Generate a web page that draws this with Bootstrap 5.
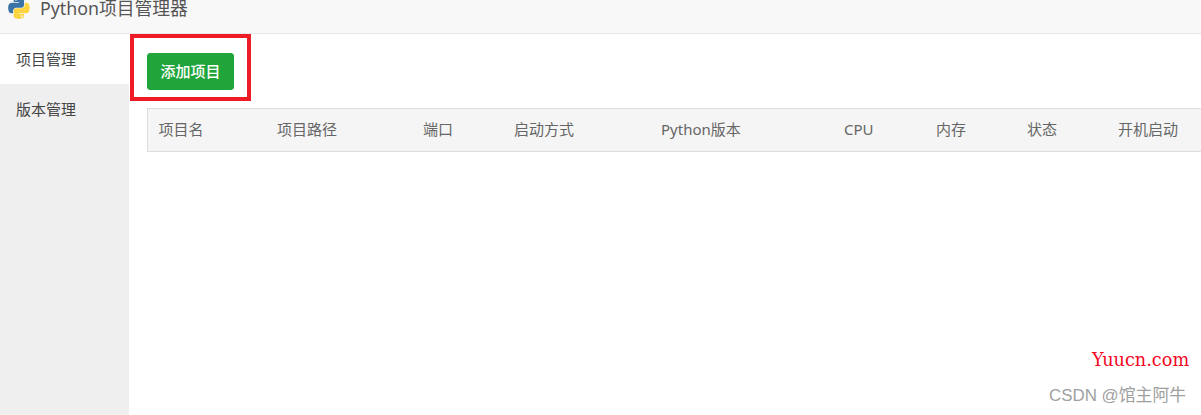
<!DOCTYPE html>
<html lang="zh">
<head>
<meta charset="utf-8">
<title>Python项目管理器</title>
<link href="https://cdn.jsdelivr.net/npm/bootstrap@5.3.0/dist/css/bootstrap.min.css" rel="stylesheet">
<style>
html,body{height:415px;overflow:hidden;background:#fff}
body{font-family:"Noto Sans","Noto Sans CJK SC",sans-serif;font-size:15px;color:#555;position:relative}
.topbar{height:34px;background:#f8f8f8;border-bottom:1px solid #e7e7e7;padding:0 0 0 8px;overflow:hidden;flex-wrap:nowrap;justify-content:flex-start;align-items:flex-start;gap:10px}
.pylogo{width:22px;height:22px;margin-top:-3px;flex:none}
.apptitle{font-size:17.8px;line-height:16px;color:#555}
.shell{height:381px}
.sidenav{width:129px;background:#efefef;flex:none}
.sidenav .nav-link{height:50px;line-height:50px;padding:0 0 0 16px;color:#444;font-size:15px;border-radius:0}
.sidenav .nav-link.active{background:#fff;color:#444}
.mainpane{flex:1;min-width:0;padding:19px 0 0 18px;overflow:hidden}
.addbtn{width:87px;height:37px;padding:0;font-size:15px;font-weight:500;line-height:35px;background:#20a53a;border-color:#20a53a;border-radius:3px;color:#fff;display:block}
.projtable{margin:18px 0 0;width:1080px;table-layout:fixed;border:1px solid #ddd;border-collapse:collapse}
.projtable th{background:#f5f5f5;color:#666;font-weight:400;font-size:15px;height:43px;padding:0 11px 2px 10.5px;vertical-align:middle;border:0;white-space:nowrap;box-shadow:none}
.redmark{position:absolute;left:130px;top:34px;width:121px;height:67px;border:4px solid #ee1c25}
.wm-site{position:absolute;left:1092px;top:350px;font-family:"DejaVu Serif",serif;font-size:17.7px;line-height:20px;color:#f5081f}
.wm-csdn{position:absolute;left:1049px;top:385px;font-family:"Liberation Sans","Noto Sans CJK SC",sans-serif;font-size:16.9px;line-height:22px;color:#a0a0a0}
</style>
</head>
<body>
<nav class="navbar topbar">
  <svg class="pylogo" viewBox="0 0 112 113" aria-hidden="true">
    <path fill="#3a74a6" d="M54.9 .9C50.3 .9 45.9 1.3 42.1 2 30.8 4 28.8 8.1 28.8 15.8V26H55.4V29.4H18.8C11.1 29.4 4.3 34 2.2 42.9-.2 53-.3 59.3 2.2 69.9 4.1 77.8 8.6 83.4 16.4 83.4H25.5V71.3C25.5 62.5 33.1 54.8 42.1 54.8H68.7C76.1 54.8 82 48.7 82 41.3V15.8C82 8.6 75.9 3.2 68.7 2 64.1 1.2 59.4 .9 54.9 .9ZM40.5 9.1C43.2 9.1 45.5 11.4 45.5 14.2 45.5 17 43.2 19.2 40.5 19.2 37.7 19.2 35.5 17 35.5 14.2 35.5 11.4 37.7 9.1 40.5 9.1Z"/>
    <path fill="#fcd43f" d="M85.4 29.4V41.2C85.4 50.4 77.6 58.1 68.7 58.1H42.1C34.8 58.1 28.8 64.3 28.8 71.6V97.1C28.8 104.3 35.1 108.6 42.1 110.7 50.5 113.2 58.6 113.6 68.7 110.7 75.4 108.7 82 104.8 82 97.1V86.9H55.4V83.4H95.3C103 83.4 105.9 78 108.6 69.9 111.4 61.5 111.3 53.5 108.6 42.9 106.7 35.3 103.1 29.4 95.3 29.4ZM70.4 94C73.1 94 75.4 96.3 75.4 99.1 75.4 101.9 73.1 104.1 70.4 104.1 67.6 104.1 65.4 101.9 65.4 99.1 65.4 96.3 67.6 94 70.4 94Z"/>
  </svg>
  <span class="apptitle">Python项目管理器</span>
</nav>
<div class="d-flex shell">
  <div class="sidenav nav flex-column">
    <a class="nav-link active" href="#">项目管理</a>
    <a class="nav-link" href="#">版本管理</a>
  </div>
  <main class="mainpane">
    <button class="btn btn-success addbtn" type="button">添加项目</button>
    <table class="table projtable">
      <colgroup>
        <col style="width:119px"><col style="width:146px"><col style="width:91px"><col style="width:147px"><col style="width:183px"><col style="width:92px"><col style="width:91px"><col style="width:91px"><col style="width:120px">
      </colgroup>
      <thead>
        <tr><th>项目名</th><th>项目路径</th><th>端口</th><th>启动方式</th><th>Python版本</th><th>CPU</th><th>内存</th><th>状态</th><th>开机启动</th></tr>
      </thead>
    </table>
  </main>
</div>
<div class="redmark"></div>
<div class="wm-site">Yuucn.com</div>
<div class="wm-csdn">CSDN @馆主阿牛</div>
<script src="https://cdn.jsdelivr.net/npm/bootstrap@5.3.0/dist/js/bootstrap.bundle.min.js"></script>
</body>
</html>
